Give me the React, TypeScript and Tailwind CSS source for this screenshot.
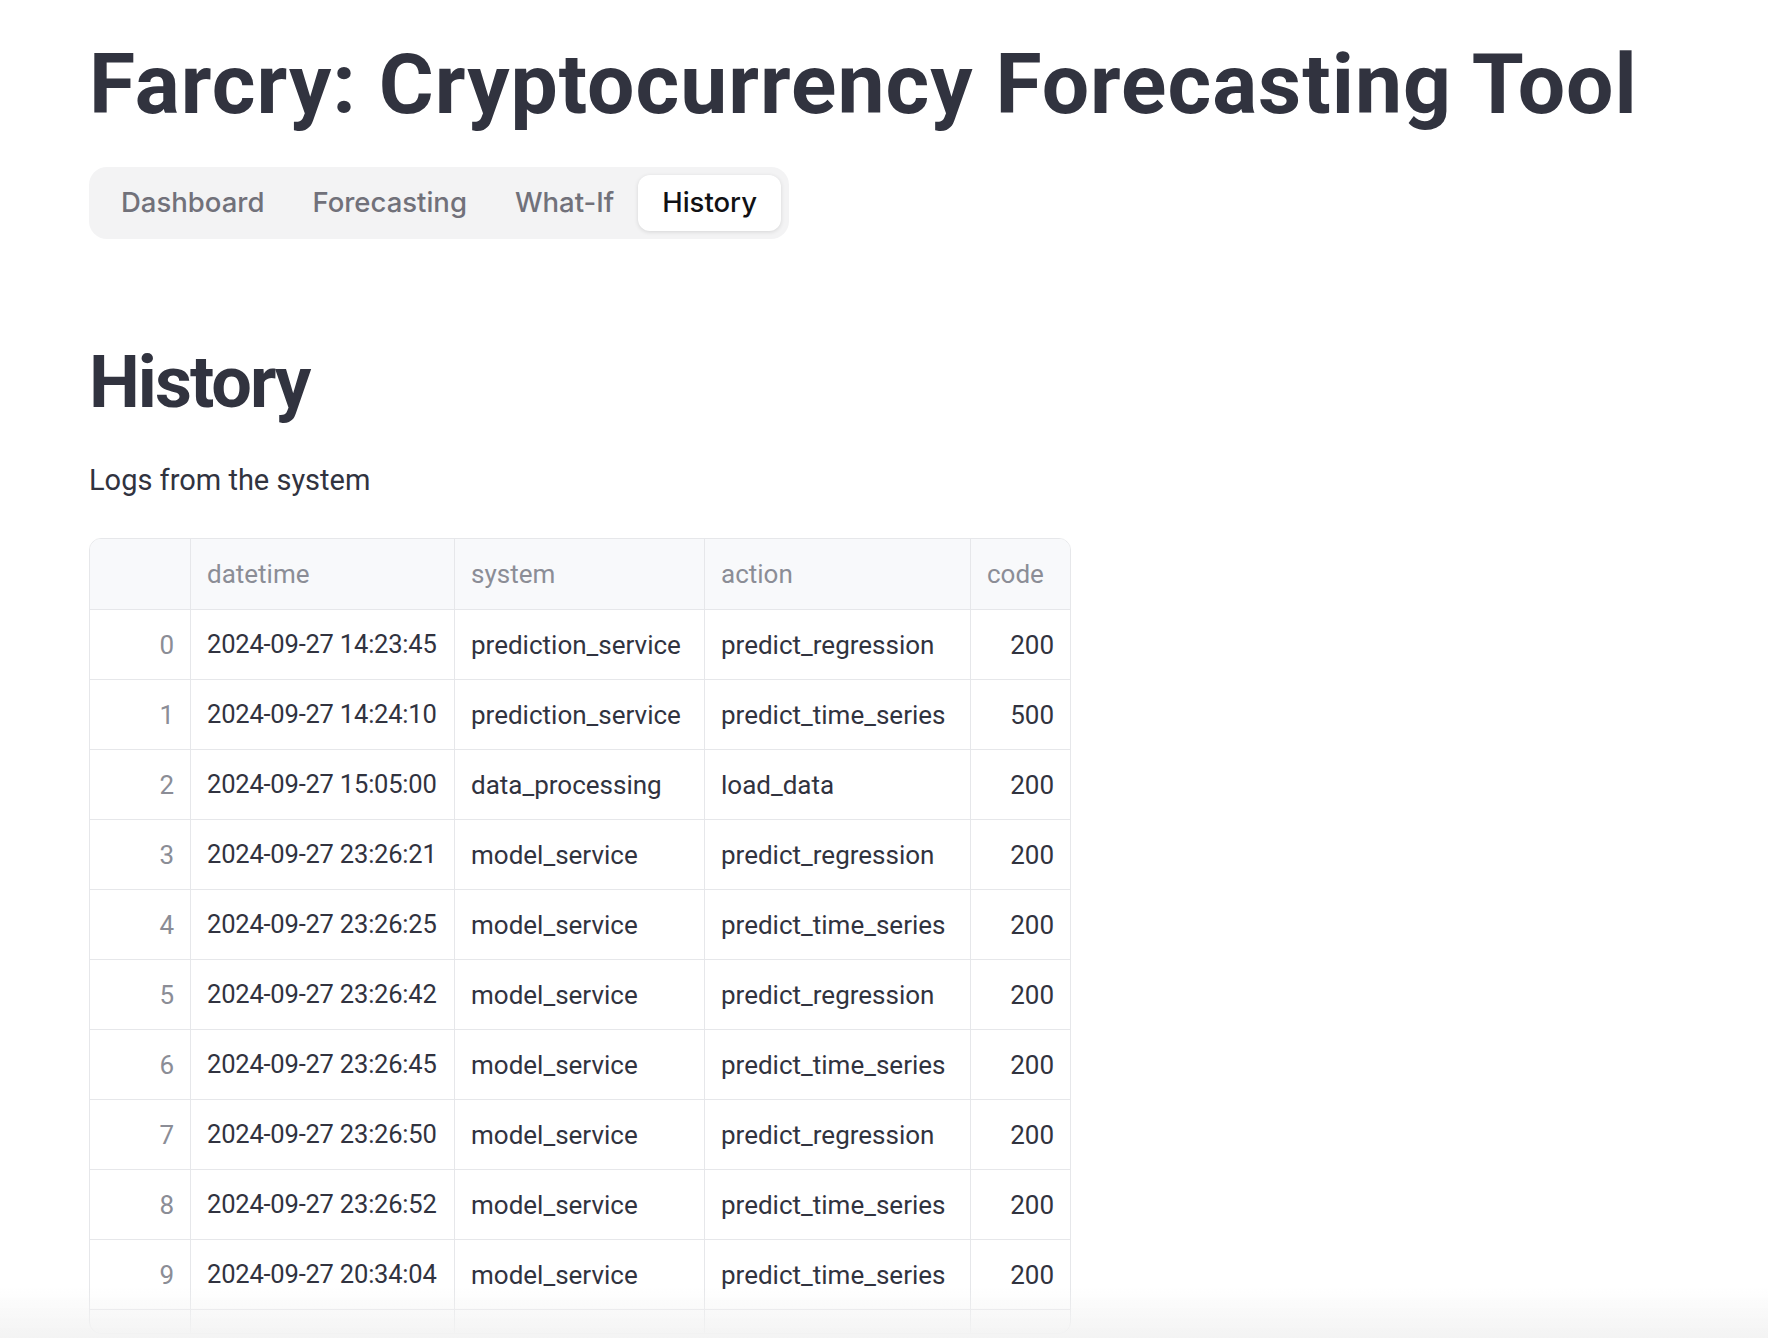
import React from "react";

const tabs = ["Dashboard", "Forecasting", "What-If", "History"];

const logs = [
  ["2024-09-27 14:23:45", "prediction_service", "predict_regression", "200"],
  ["2024-09-27 14:24:10", "prediction_service", "predict_time_series", "500"],
  ["2024-09-27 15:05:00", "data_processing", "load_data", "200"],
  ["2024-09-27 23:26:21", "model_service", "predict_regression", "200"],
  ["2024-09-27 23:26:25", "model_service", "predict_time_series", "200"],
  ["2024-09-27 23:26:42", "model_service", "predict_regression", "200"],
  ["2024-09-27 23:26:45", "model_service", "predict_time_series", "200"],
  ["2024-09-27 23:26:50", "model_service", "predict_regression", "200"],
  ["2024-09-27 23:26:52", "model_service", "predict_time_series", "200"],
  ["2024-09-27 20:34:04", "model_service", "predict_time_series", "200"],
  ["2024-09-27 20:35:11", "model_service", "predict_time_series", "200"],
];

const cols = "grid grid-cols-[101px_264px_250px_266px_99px]";
const cell = "flex items-center overflow-hidden whitespace-nowrap border-b border-[#e6e7ea] px-4";

const Tabs = () => (
  <div className="mt-[40px] inline-flex rounded-[18px] bg-[#f3f3f4] p-2 font-['Inter',sans-serif] text-[27.5px] font-medium">
    {tabs.map((t) =>
      t === "History" ? (
        <div
          key={t}
          className="flex h-[56px] items-center rounded-[12px] bg-white px-6 text-[#111114] shadow-[0_1px_4px_rgba(0,0,0,0.12)]"
        >
          {t}
        </div>
      ) : (
        <div key={t} className="flex h-[56px] items-center px-6 text-[#71717a]">
          {t}
        </div>
      )
    )}
  </div>
);

const LogTable = () => (
  <div className="mt-[43px] h-[796px] w-[982px] overflow-hidden rounded-[12px] border border-[#e6e7ea] text-[26px] leading-none">
    <div className={`${cols} h-[71px] bg-[#f8f9fb] text-[#8b8d96]`}>
      <div className="border-r border-b border-[#e6e7ea]" />
      {["datetime", "system", "action", "code"].map((h, i) => (
        <div key={h} className={`${cell} ${i < 3 ? "border-r" : ""}`}>
          {h}
        </div>
      ))}
    </div>
    {logs.map((row, idx) => (
      <div key={idx} className={`${cols} h-[70px] text-[#31333f]`}>
        <div className={`${cell} justify-end border-r text-[#8b8d96]`}>{idx}</div>
        <div className={`${cell} border-r text-[25.5px] tracking-[-0.2px]`}>{row[0]}</div>
        <div className={`${cell} border-r`}>{row[1]}</div>
        <div className={`${cell} border-r`}>{row[2]}</div>
        <div className={`${cell} justify-end`}>{row[3]}</div>
      </div>
    ))}
  </div>
);

export default function App() {
  return (
    <div className="relative min-h-[1338px] bg-white pl-[89px] font-['Roboto',sans-serif] text-[#31333f]">
      <h1 className="pt-[43px] text-[84px] font-bold leading-none tracking-[1px]">
        Farcry: Cryptocurrency Forecasting Tool
      </h1>
      <Tabs />
      <h2 className="mt-[108px] text-[72px] font-bold leading-none tracking-[-2px]">History</h2>
      <p className="mt-[47px] text-[29px] leading-none">Logs from the system</p>
      <LogTable />
      <div className="pointer-events-none fixed inset-x-0 bottom-0 h-[50px] bg-linear-to-b from-white/0 to-[#f3f3f3]" />
    </div>
  );
}
